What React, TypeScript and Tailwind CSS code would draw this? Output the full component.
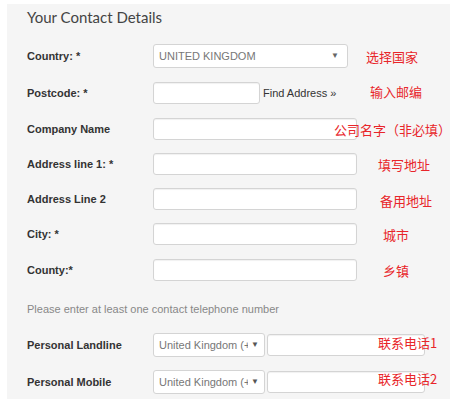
const labelCls = 'w-[126px] shrink-0 text-[11px] font-bold text-[#333]';
const inputCls = 'h-[22px] rounded-[3px] border border-[#d4d4d4] bg-white shadow-[inset_0_1px_1px_rgba(0,0,0,0.06)]';
const noteCls = 'absolute text-[13px] leading-none text-[#e8252a]';
const cjk = { fontFamily: '"Noto Sans CJK SC", "Noto Sans", sans-serif' };

function Row({ label, children, note, noteLeft, noteTop, noteSize = 'text-[13px]', className = '' }: {
  label: string;
  children: React.ReactNode;
  note?: string;
  noteLeft?: number;
  noteTop?: number;
  noteSize?: string;
  className?: string;
}) {
  return (
    <div className={`relative flex items-center ${className}`}>
      <div className={labelCls}>{label}</div>
      {children}
      {note && (
        <span className={`${noteCls} ${noteSize}`} style={{ left: noteLeft, top: noteTop, ...cjk }}>
          {note}
        </span>
      )}
    </div>
  );
}

function PhoneSelect() {
  return (
    <div className="flex h-[24px] w-[112px] items-center rounded-[3px] border border-[#d4d4d4] bg-white pl-[5px]">
      <span className="w-[89px] shrink-0 overflow-hidden whitespace-nowrap text-[11px] text-[#777]">United Kingdom (+</span>
      <span className="ml-[3px] text-[8px] text-[#555]">▼</span>
    </div>
  );
}

export default function App() {
  return (
    <div className="h-[407px] w-[459px] bg-white pl-[7px] pt-[4px]" style={{ fontFamily: '"Liberation Sans", Arial, sans-serif' }}>
      <div className="h-[395px] w-[443px] bg-[#f5f5f5] pl-[20px]">
        <h1 className="pt-[3px] text-[15px] leading-[20px] text-[#444]" style={{ fontFamily: 'Lato, "Open Sans", sans-serif' }}>
          Your Contact Details
        </h1>

        <div className="mt-[17px] flex flex-col">
          <Row label="Country: *" className="h-[24px]" note="选择国家" noteLeft={339}>
            <div className="flex h-[24px] w-[195px] items-center justify-between rounded-[3px] border border-[#d4d4d4] bg-white pl-[5px] pr-[8px]">
              <span className="text-[11px] text-[#777]">UNITED KINGDOM</span>
              <span className="text-[8px] text-[#666]">▼</span>
            </div>
          </Row>

          <Row label="Postcode: *" className="mt-[14px] h-[22px]" note="输入邮编" noteLeft={343} noteTop={3}>
            <div className={`${inputCls} w-[107px]`} />
            <span className="ml-[3px] text-[11px] text-[#333]">Find Address »</span>
          </Row>

          <Row label="Company Name" className="mt-[14px] h-[22px]" note="公司名字（非必填）" noteLeft={307} noteSize="text-[12px]">
            <div className={`${inputCls} w-[204px]`} />
          </Row>

          <Row label="Address line 1: *" className="mt-[13px] h-[22px]" note="填写地址" noteLeft={351}>
            <div className={`${inputCls} w-[204px]`} />
          </Row>

          <Row label="Address Line 2" className="mt-[13px] h-[22px]" note="备用地址" noteLeft={353} noteTop={6}>
            <div className={`${inputCls} w-[204px]`} />
          </Row>

          <Row label="City: *" className="mt-[13px] h-[22px]" note="城市" noteLeft={356}>
            <div className={`${inputCls} w-[204px]`} />
          </Row>

          <Row label="County:*" className="mt-[14px] h-[22px]" note="乡镇" noteLeft={356}>
            <div className={`${inputCls} w-[204px]`} />
          </Row>

          <p className="mt-[21px] text-[11px] leading-[14px] text-[#888]">
            Please enter at least one contact telephone number
          </p>

          <Row label="Personal Landline" className="mt-[17px] h-[24px]" note="联系电话1" noteLeft={351} noteTop={3}>
            <PhoneSelect />
            <div className={`${inputCls} ml-[2px] w-[158px]`} />
          </Row>

          <Row label="Personal Mobile" className="mt-[13px] h-[24px]" note="联系电话2" noteLeft={351} noteTop={2}>
            <PhoneSelect />
            <div className={`${inputCls} ml-[2px] w-[158px]`} />
          </Row>
        </div>
      </div>
    </div>
  );
}
